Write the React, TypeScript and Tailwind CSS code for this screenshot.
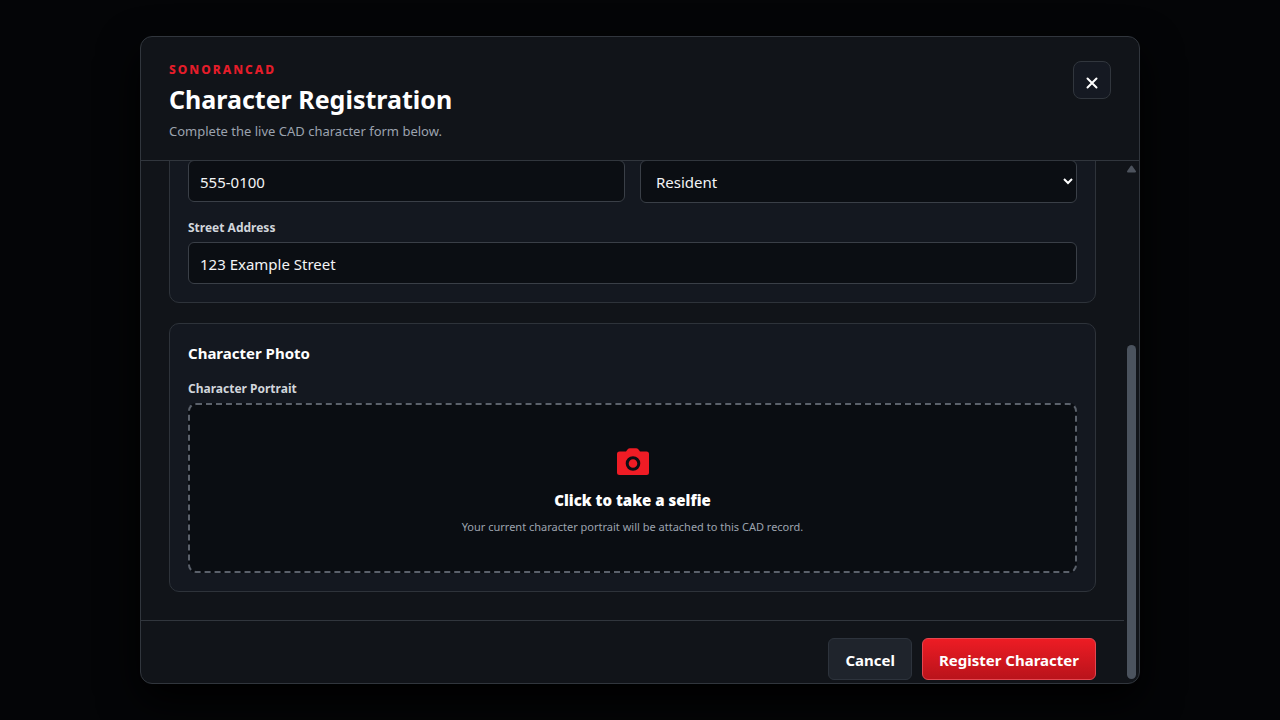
import React from "react";

const fieldClass =
  "block w-full rounded-md border border-[#3a3f47] bg-[#0b0e13] text-[15px] text-[#f3f4f6] outline-none";

const labelClass = "block text-xs leading-[18px] font-bold text-[#d1d5db]";

const CameraIcon = () => (
  <svg width="32" height="28" viewBox="0 0 32 28" aria-hidden="true">
    <path
      fill="#ef1c25"
      d="M2.500 3.500H9l1.500-2Q11.500.3 13 .3h6q1.500 0 2.500 1.200l1.500 2h6.500A2.500 2.500 0 0 1 32 6v18.500a2.500 2.500 0 0 1-2.500 2.500h-27A2.500 2.500 0 0 1 0 24.500V6a2.500 2.500 0 0 1 2.500-2.500Z"
    />
    <circle cx="16" cy="15.500" r="5.800" fill="none" stroke="#0b0e13" strokeWidth="3" />
  </svg>
);

const Header = () => (
  <header className="flex shrink-0 items-start justify-between border-b border-[#31363d] px-7 pt-6 pb-[19px]">
    <div>
      <p className="pt-px text-xs leading-4 font-extrabold tracking-[2px] text-[#e51d2a]">
        SONORANCAD
      </p>
      <h1 className="mt-[3px] text-[25px] leading-9 font-bold text-white">
        Character Registration
      </h1>
      <p className="mt-1 text-[13px] leading-5 text-[#9ca3af]">
        Complete the live CAD character form below.
      </p>
    </div>
    <button
      type="button"
      aria-label="Close"
      className="flex size-[38px] items-center justify-center rounded-lg border border-[#31363d] bg-[#151922] pt-1.5 text-white"
    >
      <svg width="12" height="12" viewBox="0 0 12 12" aria-hidden="true">
        <path
          d="M1.500 1.500l9 9M10.500 1.500l-9 9"
          stroke="currentColor"
          strokeWidth="2"
          strokeLinecap="round"
        />
      </svg>
    </button>
  </header>
);

const ContactSection = () => (
  <section className="rounded-[10px] border border-[#2e333a] bg-[#141820] p-[18px]">
    <div className="grid grid-cols-2 items-start gap-[15px]">
      <input
        aria-label="Phone Number"
        defaultValue="555-0100"
        className={`${fieldClass} h-[42px] px-[11px] pt-0.5`}
      />
      <div className="relative">
        <select
          aria-label="Residency"
          className={`${fieldClass} h-[43px] appearance-none px-[15px] pt-0.5`}
        >
          <option>Resident</option>
        </select>
        <svg
          className="pointer-events-none absolute top-[18px] right-1 text-white"
          width="10"
          height="7"
          viewBox="0 0 10 7"
          aria-hidden="true"
        >
          <path d="M1 1l4 4 4-4" fill="none" stroke="currentColor" strokeWidth="2" />
        </svg>
      </div>
    </div>
    <label htmlFor="street" className={`${labelClass} mt-4`}>
      Street Address
    </label>
    <input
      id="street"
      defaultValue="123 Example Street"
      className={`${fieldClass} mt-[5px] h-[42px] px-[11px] pt-0.5`}
    />
  </section>
);

const PhotoSection = () => (
  <section className="mt-5 rounded-[10px] border border-[#2e333a] bg-[#141820] p-[18px]">
    <h2 className="text-[15px] leading-[22px] font-bold text-white">Character Photo</h2>
    <label htmlFor="portrait" className={`${labelClass} mt-4`}>
      Character Portrait
    </label>
    <button
      id="portrait"
      type="button"
      className="mt-[5px] flex h-[170px] w-full flex-col items-center justify-center rounded-lg border-2 border-dashed border-[#5b616b] bg-[#0a0d12] pt-2"
    >
      <CameraIcon />
      <span className="mt-3 text-[15px] leading-6 font-black text-white">
        Click to take a selfie
      </span>
      <span className="mt-1.5 text-[11px] leading-[18px] text-[#9ca3af]">
        Your current character portrait will be attached to this CAD record.
      </span>
    </button>
  </section>
);

const Scrollbar = () => (
  <div className="flex w-[15px] shrink-0 flex-col items-center justify-between pt-1 pb-1">
    <svg width="9" height="8" viewBox="0 0 9 8" aria-hidden="true">
      <path
        d="M4.500 1.500L8 6.500H1Z"
        fill="#4d535d"
        stroke="#4d535d"
        strokeWidth="2"
        strokeLinejoin="round"
      />
    </svg>
    <div className="h-[65%] w-[9px] rounded-full bg-[#4b535e]" />
  </div>
);

const App = () => {
  return (
    <div className="flex h-screen items-center justify-center bg-[#040507] px-6 font-['Noto_Sans','Open_Sans',sans-serif]">
      <div className="flex h-[90vh] w-full max-w-[1000px] flex-col overflow-hidden rounded-xl border border-[#31363d] bg-[#111419] shadow-[0_16px_40px_#000000]">
        <Header />
        <div className="flex min-h-0 flex-1">
          <form className="flex min-w-0 flex-1 flex-col justify-end overflow-hidden pb-[3px]">
            <div className="px-7 pb-7">
              <ContactSection />
              <PhotoSection />
            </div>
            <div className="flex justify-end gap-2.5 border-t border-[#31363d] px-7 pt-[17px]">
              <button
                type="button"
                className="h-[42px] rounded-md border border-[#2d333c] bg-[#1f242c] px-4 pt-0.5 text-[15px] font-bold text-white"
              >
                Cancel
              </button>
              <button
                type="button"
                className="h-[42px] rounded-md border border-[#e4464f] bg-linear-to-b from-[#ed1c24] to-[#b9131b] px-4 pt-0.5 text-[15px] font-bold text-white"
              >
                Register Character
              </button>
            </div>
          </form>
          <Scrollbar />
        </div>
      </div>
    </div>
  );
};

export default App;
